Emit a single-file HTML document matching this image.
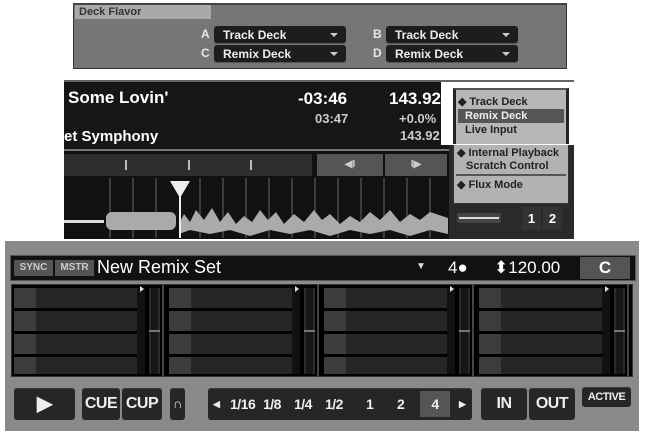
<!DOCTYPE html>
<html><head><meta charset="utf-8"><style>
*{margin:0;padding:0;box-sizing:border-box}
body{width:646px;height:433px;background:#fff;position:relative;overflow:hidden;font-family:"Liberation Sans",sans-serif;font-weight:bold}
.a{position:absolute}
.dd{position:absolute;background:#1d1d1d;border-radius:3px;color:#eee;font-size:12px;padding:2px 0 0 9px;height:17px;box-shadow:0 1px 0 #555}
.dd:after{content:"";position:absolute;right:8px;top:7px;border:4px solid transparent;border-top:4px solid #ccc;border-bottom:0}
.lb{position:absolute;color:#e8e8e8;font-size:12px}
.w{color:#fff}
.btn{position:absolute;background:#262626;border-radius:3px;color:#eee;text-align:center;font-size:16px;box-shadow:inset 0 1px 0 #3a3a3a;letter-spacing:-0.5px}
</style></head><body>
<!-- section 1 -->
<div class="a" style="left:73px;top:3px;width:494px;height:66px;background:#767676;border:1px solid #333;border-top:2px solid #444"></div>
<div class="a" style="left:75px;top:5px;width:136px;height:14px;background:#a9a9a9;color:#333;font-size:11px;padding:1px 4px">Deck Flavor</div>
<div class="lb" style="left:201px;top:27px">A</div><div class="dd" style="left:214px;top:26px;width:132px">Track Deck</div>
<div class="lb" style="left:201px;top:46px">C</div><div class="dd" style="left:214px;top:45px;width:132px">Remix Deck</div>
<div class="lb" style="left:373px;top:27px">B</div><div class="dd" style="left:386px;top:26px;width:132px">Track Deck</div>
<div class="lb" style="left:373px;top:46px">D</div><div class="dd" style="left:386px;top:45px;width:132px">Remix Deck</div>

<!-- section 2 -->
<div class="a" style="left:64px;top:80px;width:510px;height:159px;background:#111;border-top:2px solid #666"></div>
<div class="a" style="left:64px;top:83px;width:385px;height:66px;background:#161616"></div>
<div class="a w" style="left:68px;top:88px;font-size:17px">Some Lovin'</div>
<div class="a w" style="left:298px;top:89px;font-size:17px">-03:46</div>
<div class="a" style="left:315px;top:111px;font-size:13px;color:#ccc">03:47</div>
<div class="a w" style="left:389px;top:89px;font-size:17px">143.92</div>
<div class="a" style="left:399px;top:111px;font-size:13px;color:#ccc">+0.0%</div>
<div class="a w" style="left:64px;top:128px;font-size:15px">et Symphony</div>
<div class="a" style="left:400px;top:128px;font-size:13px;color:#ccc">143.92</div>
<div class="a" style="left:64px;top:149px;width:385px;height:2px;background:#777"></div>
<div class="a" style="left:64px;top:154px;width:248px;height:22px;background:#2e2e2e;border-radius:2px"></div>
<div class="a" style="left:125px;top:160px;width:2px;height:10px;background:#bbb"></div>
<div class="a" style="left:188px;top:160px;width:2px;height:10px;background:#bbb"></div>
<div class="a" style="left:250px;top:160px;width:2px;height:10px;background:#bbb"></div>
<div class="a" style="left:317px;top:154px;width:66px;height:22px;background:#555;color:#ccc;font-size:10px;text-align:center;line-height:22px">◀I</div>
<div class="a" style="left:385px;top:154px;width:62px;height:22px;background:#555;color:#ccc;font-size:10px;text-align:center;line-height:22px">I▶</div>
<svg class="a" style="left:64px;top:178px" width="384" height="60">
<g stroke="#666" stroke-width="1">
<line x1="46" y1="0" x2="46" y2="60"/><line x1="69" y1="0" x2="69" y2="60"/><line x1="92" y1="0" x2="92" y2="60"/><line x1="136" y1="0" x2="136" y2="60"/><line x1="159" y1="0" x2="159" y2="60"/><line x1="182" y1="0" x2="182" y2="60"/><line x1="205" y1="0" x2="205" y2="60"/><line x1="228" y1="0" x2="228" y2="60"/><line x1="251" y1="0" x2="251" y2="60"/><line x1="274" y1="0" x2="274" y2="60"/><line x1="297" y1="0" x2="297" y2="60"/><line x1="320" y1="0" x2="320" y2="60"/><line x1="343" y1="0" x2="343" y2="60"/><line x1="366" y1="0" x2="366" y2="60"/></g>
<rect x="0" y="42" width="40" height="3" fill="#ddd"/>
<rect x="42" y="34" width="70" height="18" fill="#aaa" rx="6"/>
<path d="M115 46 L120 36 L126 44 L132 32 L140 42 L148 30 L156 44 L164 34 L172 46 L180 38 L188 44 L196 32 L204 42 L212 34 L220 46 L230 36 L240 44 L250 32 L258 42 L266 36 L276 46 L286 38 L296 44 L306 34 L316 42 L326 32 L336 44 L346 36 L356 42 L366 34 L384 40 L384 56 L366 52 L346 58 L326 52 L306 56 L286 52 L266 58 L246 52 L226 56 L206 52 L186 58 L166 52 L146 56 L126 52 L115 56Z" fill="#aaa"/>
<line x1="116" y1="10" x2="116" y2="60" stroke="#eee" stroke-width="2"/>
<polygon points="106,3 126,3 116,20" fill="#eee"/>
</svg>
<!-- right column -->
<div class="a" style="left:449px;top:83px;width:125px;height:156px;background:#2a2a2a"></div>
<div class="a" style="left:453px;top:144px;width:116px;height:60px;background:#b2b2b2;border:1px solid #333;border-top:0;color:#222;font-size:11px">
<div style="padding:2px 0 0 3px">◆ Internal Playback</div><div style="padding:1px 0 0 12px">Scratch Control</div>
<div style="border-top:2px solid #555;margin:2px 2px 0;padding:2px 0 0 1px">◆ Flux Mode</div></div>
<div class="a" style="left:457px;top:213px;width:44px;height:10px;background:#444;border-radius:2px"></div>
<div class="a" style="left:459px;top:217px;width:40px;height:2px;background:#ddd"></div>
<div class="a" style="left:522px;top:207px;width:19px;height:23px;background:#333;color:#fff;font-size:13px;text-align:center;line-height:23px">1</div>
<div class="a" style="left:543px;top:207px;width:19px;height:23px;background:#333;color:#fff;font-size:13px;text-align:center;line-height:23px">2</div>
<div class="a" style="left:453px;top:88px;width:116px;height:56px;background:#b7b7b7;border-left:3px solid #222;border-right:3px solid #222;color:#222;font-size:11px;border-top:2px solid #555;overflow:hidden">
<div style="padding:5px 0 0 2px">◆ Track Deck</div>
<div style="margin:1px 2px 0;background:#555;color:#eee;padding:1px 0 1px 7px">Remix Deck</div>
<div style="padding:1px 0 0 9px">Live Input</div></div>
<div class="a" style="left:441px;top:82px;width:138px;height:63px;border:solid #fff;border-width:6px 10px 1px 12px"></div>

<!-- section 3 -->
<div class="a" style="left:5px;top:241px;width:634px;height:190px;background:#8a8a8a"></div>
<div class="a" style="left:10px;top:255px;width:626px;height:26px;background:#111;border:1px solid #555"></div>
<div class="a" style="left:14px;top:260px;width:39px;height:16px;background:#555;color:#ccc;font-size:10px;text-align:center;line-height:16px">SYNC</div>
<div class="a" style="left:55px;top:260px;width:39px;height:16px;background:#555;color:#ccc;font-size:10px;text-align:center;line-height:16px">MSTR</div>
<div class="a w" style="left:97px;top:257px;font-size:18px;font-weight:normal">New Remix Set</div>
<div class="a" style="left:416px;top:261px;font-size:10px;color:#ddd">▼</div>
<div class="a w" style="left:448px;top:258px;font-size:17px;font-weight:normal">4●</div>
<div class="a w" style="left:494px;top:258px;font-size:17px;font-weight:normal">⬍120.00</div>
<div class="a" style="left:580px;top:257px;width:50px;height:22px;background:#555;color:#fff;font-size:17px;text-align:center;line-height:22px">C</div>
<div class="a" style="left:11px;top:284px;width:622px;height:93px;background:#000;border:1px solid #333"></div>
<svg class="a" style="left:11px;top:284px" width="624" height="93">
<g id="c">
<g fill="#262626"><rect x="3" y="4" width="130" height="20" rx="3"/><rect x="3" y="27" width="130" height="20" rx="3"/><rect x="3" y="50" width="130" height="20" rx="3"/><rect x="3" y="73" width="130" height="17" rx="3"/></g>
<g fill="#3c3c3c"><rect x="3" y="4" width="22" height="20"/><rect x="3" y="27" width="22" height="20"/><rect x="3" y="50" width="22" height="20"/><rect x="3" y="73" width="22" height="17"/></g>
<rect x="126" y="4" width="8" height="86" fill="#111"/>
<rect x="138" y="4" width="11" height="86" fill="#2a2a2a"/><rect x="140" y="4" width="7" height="86" fill="#161616"/>
<rect x="138" y="46" width="11" height="2" fill="#777"/>
<polygon points="129,2 133,5 129,8" fill="#ddd"/>
<rect x="151" y="0" width="2" height="93" fill="#444"/>
</g>
<use href="#c" x="155"/><use href="#c" x="310"/><use href="#c" x="465"/>
</svg>
<div class="btn" style="left:14px;top:388px;width:61px;height:32px;line-height:32px;font-size:20px">▶</div>
<div class="btn" style="left:82px;top:388px;width:38px;height:32px;line-height:32px">CUE</div>
<div class="btn" style="left:122px;top:388px;width:40px;height:32px;line-height:32px">CUP</div>
<div class="btn" style="left:170px;top:388px;width:15px;height:32px;line-height:32px;font-size:13px">∩</div>
<div class="btn" style="left:208px;top:388px;width:264px;height:32px;line-height:32px;font-size:14px;color:#eee">
<span class="a" style="left:5px;font-size:9px">◀</span>
<span class="a" style="left:22px">1/16</span><span class="a" style="left:55px">1/8</span><span class="a" style="left:86px">1/4</span><span class="a" style="left:117px">1/2</span><span class="a" style="left:158px">1</span><span class="a" style="left:189px">2</span>
<span class="a" style="left:212px;top:3px;width:30px;height:26px;background:#555;line-height:26px">4</span>
<span class="a" style="left:251px;font-size:9px">▶</span></div>
<div class="btn" style="left:481px;top:388px;width:46px;height:32px;line-height:32px">IN</div>
<div class="btn" style="left:529px;top:388px;width:46px;height:32px;line-height:32px">OUT</div>
<div class="btn" style="left:582px;top:387px;width:49px;height:20px;line-height:20px;font-size:11px">ACTIVE</div>
</body></html>
